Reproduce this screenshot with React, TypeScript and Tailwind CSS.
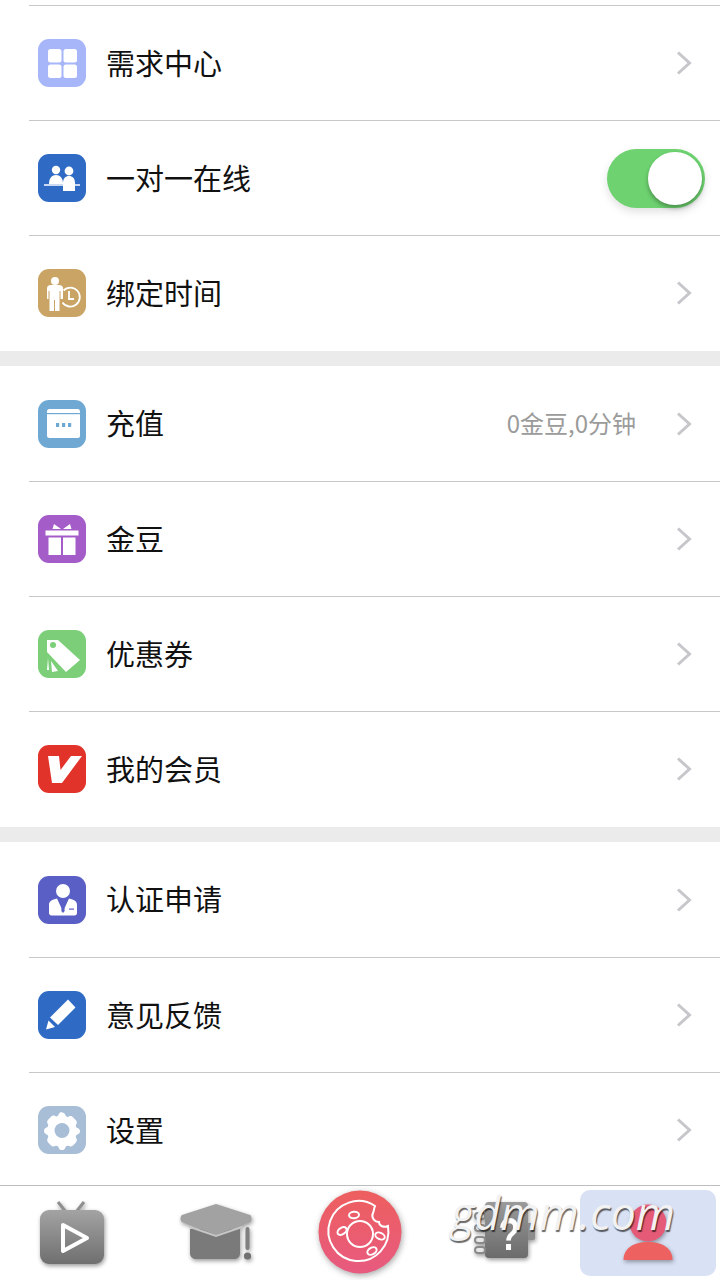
import type { ReactNode } from "react";

const W = "#ffffff";

function Tile({ bg, children }: { bg: string; children: ReactNode }) {
  return (
    <div className="w-12 h-12 rounded-[11px] shrink-0" style={{ backgroundColor: bg }}>
      <svg width="48" height="48" viewBox="0 0 48 48">{children}</svg>
    </div>
  );
}

const GridIcon = () => (
  <Tile bg="#a7b6f8">
    <rect x="10" y="10" width="13.5" height="13.5" rx="2.5" fill={W} />
    <rect x="25.5" y="10" width="13.5" height="13.5" rx="2.5" fill={W} />
    <rect x="10" y="25.5" width="13.5" height="13.5" rx="2.5" fill={W} />
    <rect x="25.5" y="25.5" width="13.5" height="13.5" rx="2.5" fill={W} />
  </Tile>
);

const PeopleIcon = () => (
  <Tile bg="#2f6ac5">
    <circle cx="18" cy="16" r="4.2" fill={W} />
    <path d="M11 30c0-6 3-9 7-9s7 3 7 9z" fill={W} />
    <circle cx="31" cy="17" r="4.4" fill={W} />
    <path d="M25 37v-8c0-4.500 2.500-7 6-7s6 2.500 6 7v8z" fill={W} />
    <path d="M6 31h36" stroke={W} strokeWidth="1.600" />
  </Tile>
);

const TimeIcon = () => (
  <Tile bg="#c9a464">
    <circle cx="17" cy="12" r="4" fill={W} />
    <path d="M9 19c0-2 2-3 4-3h8c2 0 4 1 4 3v11h-2.500v-8h-1v20h-4.500V31h-1v11h-4.500V22h-1v8H9z" fill={W} />
    <path d="M25.500 21.500a9.500 9.500 0 1 1 -1 12" fill="none" stroke={W} strokeWidth="1.800" />
    <path d="M31 22v8h5" fill="none" stroke={W} strokeWidth="1.800" />
  </Tile>
);

const CardIcon = () => (
  <Tile bg="#6fa9d3">
    <rect x="9" y="9" width="33" height="29" rx="2.500" fill={W} />
    <rect x="9" y="13" width="33" height="1.200" fill="#6fa9d3" />
    <rect x="18" y="23" width="3.200" height="4" fill="#6fa9d3" />
    <rect x="24" y="23" width="3.200" height="4" fill="#6fa9d3" />
    <rect x="30" y="23" width="3.200" height="4" fill="#6fa9d3" />
  </Tile>
);

const GiftIcon = () => (
  <Tile bg="#a45cc8">
    <path d="M23 14l-7-5-1.500 5zM25 14l7-5 1.500 5z" fill={W} />
    <rect x="7.500" y="15.500" width="33" height="5" fill={W} />
    <rect x="10.500" y="22.500" width="12.500" height="17.500" fill={W} />
    <rect x="25" y="22.500" width="12.500" height="17.500" fill={W} />
  </Tile>
);

const TagIcon = () => (
  <Tile bg="#7ccf78">
    <path d="M9 10h11l22 20-14 12L9 22z" fill={W} />
    <circle cx="15" cy="15" r="3" fill="#7ccf78" />
    <path d="M10 28l-1 12h2zM13 31l7 10-6 1z" fill={W} />
  </Tile>
);

const VipIcon = () => (
  <Tile bg="#e2332b">
    <path d="M10 11h11l1.500 14L33 11h11L24 38H14z" fill={W} />
  </Tile>
);

const SuitIcon = () => (
  <Tile bg="#5a5fc6">
    <circle cx="25" cy="15" r="7" fill={W} />
    <path d="M11 29c0-4 3-5.500 8-6.500l6 13 6-13c5 1 8 2.500 8 6.500v8c0 1.500-1 2.500-2.500 2.500h-23c-1.500 0-2.500-1-2.500-2.500z" fill={W} />
    <path d="M23.500 23h3l-.8 3 1 9-1.700 2-1.700-2 1-9z" fill="#5a5fc6" />
    <rect x="31" y="32.500" width="5" height="1.200" fill="#5a5fc6" />
  </Tile>
);

const PenIcon = () => (
  <Tile bg="#2f6ac5">
    <path d="M30 8.500l7.500 8L20 34l-8-7.500z" fill={W} />
    <path d="M10.500 29.500l6.500 6.500-9 2.500z" fill={W} />
  </Tile>
);

const GearIcon = () => (
  <Tile bg="#a8bdd6">
    <path
      d="M24 6.500c1.800 0 3 1 3.400 2.600.4 1.500 2 2.300 3.400 1.500 1.500-.8 3-.6 4.200.6l2.900 3c1.200 1.200 1.200 2.900.3 4.300-.9 1.300-.3 3 1.200 3.500 1.600.5 2.600 1.600 2.600 3.300s-1 2.800-2.600 3.300c-1.500.5-2.100 2.200-1.200 3.500.9 1.400.9 3.100-.3 4.300l-2.900 3c-1.200 1.200-2.700 1.400-4.200.6-1.400-.8-3-.000-3.400 1.500-.4 1.600-1.600 2.600-3.400 2.600s-3-1-3.400-2.600c-.4-1.500-2-2.300-3.400-1.500-1.500.8-3 .6-4.200-.6l-2.900-3c-1.200-1.200-1.200-2.900-.3-4.300.9-1.300.3-3-1.200-3.500C7 27.600 6 26.500 6 24.800s1-2.800 2.600-3.300c1.500-.5 2.100-2.200 1.200-3.500-.9-1.400-.9-3.100.3-4.300l2.900-3c1.200-1.200 2.700-1.400 4.200-.6 1.400.8 3 0 3.400-1.500.4-1.600 1.600-2.600 3.400-2.600z"
      fill={W}
    />
    <circle cx="24" cy="24.500" r="7.500" fill="#a8bdd6" />
  </Tile>
);

function Chevron() {
  return (
    <svg width="18" height="26" viewBox="0 0 18 26" className="shrink-0">
      <path d="M3 2.500l11.500 10.500L3 23.500" fill="none" stroke="#c6c6cb" strokeWidth="3" />
    </svg>
  );
}

function Toggle() {
  return (
    <div className="w-[98px] h-[59px] rounded-full bg-[#6dd26f] flex items-center justify-end pr-[3px] shadow-[0_4px_8px_rgba(0,0,0,0.12)]">
      <div className="w-[54px] h-[53px] rounded-full bg-white shadow-[0_3px_4px_rgba(0,0,0,0.3)]" />
    </div>
  );
}

function Row({ icon, label, first, value, toggle }: { icon: ReactNode; label: string; first?: boolean; value?: string; toggle?: boolean }) {
  return (
    <div className="pl-[29px]">
      <div className={first ? "h-[115px] flex items-center pl-[9px]" : "h-[115px] flex items-center pl-[9px] border-t border-[#c8c8c8]"}>
        {icon}
        <span className={first ? "ml-5 pb-[2px] text-[29px] text-[#111111] font-normal" : "ml-5 text-[29px] text-[#111111] font-normal"}>{label}</span>
        <div className="ml-auto flex items-center">
          {value && <span className="text-[24px] pb-[2px] text-[#9b9b9b] mr-[39px]">{value}</span>}
          {toggle ? (
            <div className="mr-[15px]">
              <Toggle />
            </div>
          ) : (
            <div className="mr-[27px]">
              <Chevron />
            </div>
          )}
        </div>
      </div>
    </div>
  );
}

const Gap = () => <div className="h-[15px] mt-px bg-[#ebebeb]" />;

const defs = (id: string, a: string, b: string) => (
  <defs>
    <linearGradient id={id} x1="0" y1="0" x2="0" y2="1">
      <stop offset="0" stopColor={a} />
      <stop offset="1" stopColor={b} />
    </linearGradient>
  </defs>
);

function TvTab() {
  return (
    <svg width="96" height="86" viewBox="0 0 96 86" className="drop-shadow-[1px_2px_2px_rgba(0,0,0,0.4)]">
      {defs("tv", "#a3a3a3", "#6f6f6f")}
      <path d="M34 12l8 10M60 12l-8 10" stroke="#8f8f8f" strokeWidth="3" />
      <rect x="16" y="20" width="64" height="54" rx="9" fill="url(#tv)" />
      <path d="M39 35l24 13-24 13z" fill="none" stroke={W} strokeWidth="4" strokeLinejoin="round" />
    </svg>
  );
}

function CapTab() {
  return (
    <svg width="96" height="86" viewBox="0 0 96 86" className="drop-shadow-[1px_2px_2px_rgba(0,0,0,0.4)]">
      {defs("cap", "#aaaaaa", "#6f6f6f")}
      <path d="M22 39h50v24c0 4-3 6-6 6H28c-3 0-6-2-6-6z" fill="#7a7a7a" />
      <path d="M48 14l34 11c2 1 2 6 0 7L48 45 14 32c-2-1-2-6 0-7z" fill="#a2a2a2" />
      <path d="M22 37l26 9 26-9" fill="none" stroke="#c6c6c6" strokeWidth="2" />
      <rect x="77.500" y="37" width="4" height="23" rx="2" fill="#808080" />
      <circle cx="79.500" cy="66" r="3.600" fill="#707070" />
    </svg>
  );
}

function DonutTab() {
  return (
    <svg width="96" height="86" viewBox="0 0 96 86" className="drop-shadow-[1px_2px_3px_rgba(0,0,0,0.35)]">
      <defs>
        <linearGradient id="donut" x1="0" y1="0" x2="0" y2="1">
          <stop offset="0" stopColor="#ed5f5e" />
          <stop offset="1" stopColor="#e85a7f" />
        </linearGradient>
      </defs>
      <circle cx="48" cy="42" r="41.500" fill="url(#donut)" />
      <g fill="none" stroke={W} strokeWidth="2">
        <path d="M63 16a30 30 0 1 0 13 20c-4 2-9 0-9-4-5 0-8-5-6-9 1-2 1-5 2-7z" />
        <circle cx="48" cy="44" r="13" />
        <ellipse cx="42" cy="25" rx="5" ry="3.200" transform="rotate(-5 42 25)" />
        <ellipse cx="30" cy="41" rx="5" ry="3.200" transform="rotate(-35 30 41)" />
        <ellipse cx="68" cy="46" rx="5" ry="3.200" transform="rotate(25 68 46)" />
        <ellipse cx="60" cy="61" rx="5" ry="3.200" transform="rotate(-30 60 61)" />
      </g>
    </svg>
  );
}

function BookTab() {
  return (
    <div className="relative w-24 h-[86px]">
      <svg width="96" height="86" viewBox="0 0 96 86" className="drop-shadow-[1px_2px_2px_rgba(0,0,0,0.4)]">
        {defs("book", "#9a9a9a", "#6b6b6b")}
        <rect x="70" y="33" width="9" height="17" rx="2" fill="#8c8c8c" />
        <rect x="29" y="12" width="43" height="56" rx="4" fill="url(#book)" />
        <g fill="#e6e6e6" stroke="#8a8a8a" strokeWidth="2">
          <rect x="19" y="23" width="10" height="6" rx="3" />
          <rect x="19" y="35" width="10" height="6" rx="3" />
          <rect x="19" y="47" width="10" height="6" rx="3" />
          <rect x="19" y="57" width="10" height="6" rx="3" />
        </g>
      </svg>
      <span className="absolute left-[39px] top-[20px] text-[47px] leading-[48px] font-bold text-white scale-x-75 font-['Liberation_Sans',sans-serif]">?</span>
    </div>
  );
}

function PersonTab() {
  return (
    <div className="w-[136px] h-[86px] rounded-[10px] bg-[#d9e1f5] flex justify-center">
      <svg width="96" height="86" viewBox="0 0 96 86" className="drop-shadow-[1px_2px_2px_rgba(0,0,0,0.35)]">
        <circle cx="48" cy="33" r="18.500" fill="#e55a76" />
        <path d="M23.500 70c0-11 9-18 24.500-18s24.500 7 24.500 18z" fill="#ee6161" />
      </svg>
    </div>
  );
}

export default function App() {
  return (
    <div className="relative w-[720px] h-[1280px] overflow-hidden bg-white flex flex-col font-['Noto_Sans_CJK_SC',sans-serif]">
      <div className="h-[5px]" />
      <Row icon={<GridIcon />} label="需求中心" />
      <Row icon={<PeopleIcon />} label="一对一在线" toggle />
      <Row icon={<TimeIcon />} label="绑定时间" />
      <Gap />
      <Row icon={<CardIcon />} label="充值" value="0金豆,0分钟" first />
      <Row icon={<GiftIcon />} label="金豆" />
      <Row icon={<TagIcon />} label="优惠券" />
      <Row icon={<VipIcon />} label="我的会员" />
      <Gap />
      <Row icon={<SuitIcon />} label="认证申请" first />
      <Row icon={<PenIcon />} label="意见反馈" />
      <Row icon={<GearIcon />} label="设置" />
      <div className="flex-1 border-t border-[#bdbdbd] grid grid-cols-5 pt-1 -mt-[2px]">
        <div className="flex justify-center"><TvTab /></div>
        <div className="flex justify-center"><CapTab /></div>
        <div className="flex justify-center"><DonutTab /></div>
        <div className="flex justify-center"><BookTab /></div>
        <div className="flex justify-center"><PersonTab /></div>
      </div>
      <span className="absolute left-[451px] top-[1183px] text-[45px] leading-[60px] italic text-[#f2f2f2] font-['Open_Sans',sans-serif] [text-shadow:1px_2px_1px_rgba(0,0,0,0.6)]">gdmm.com</span>
    </div>
  );
}
